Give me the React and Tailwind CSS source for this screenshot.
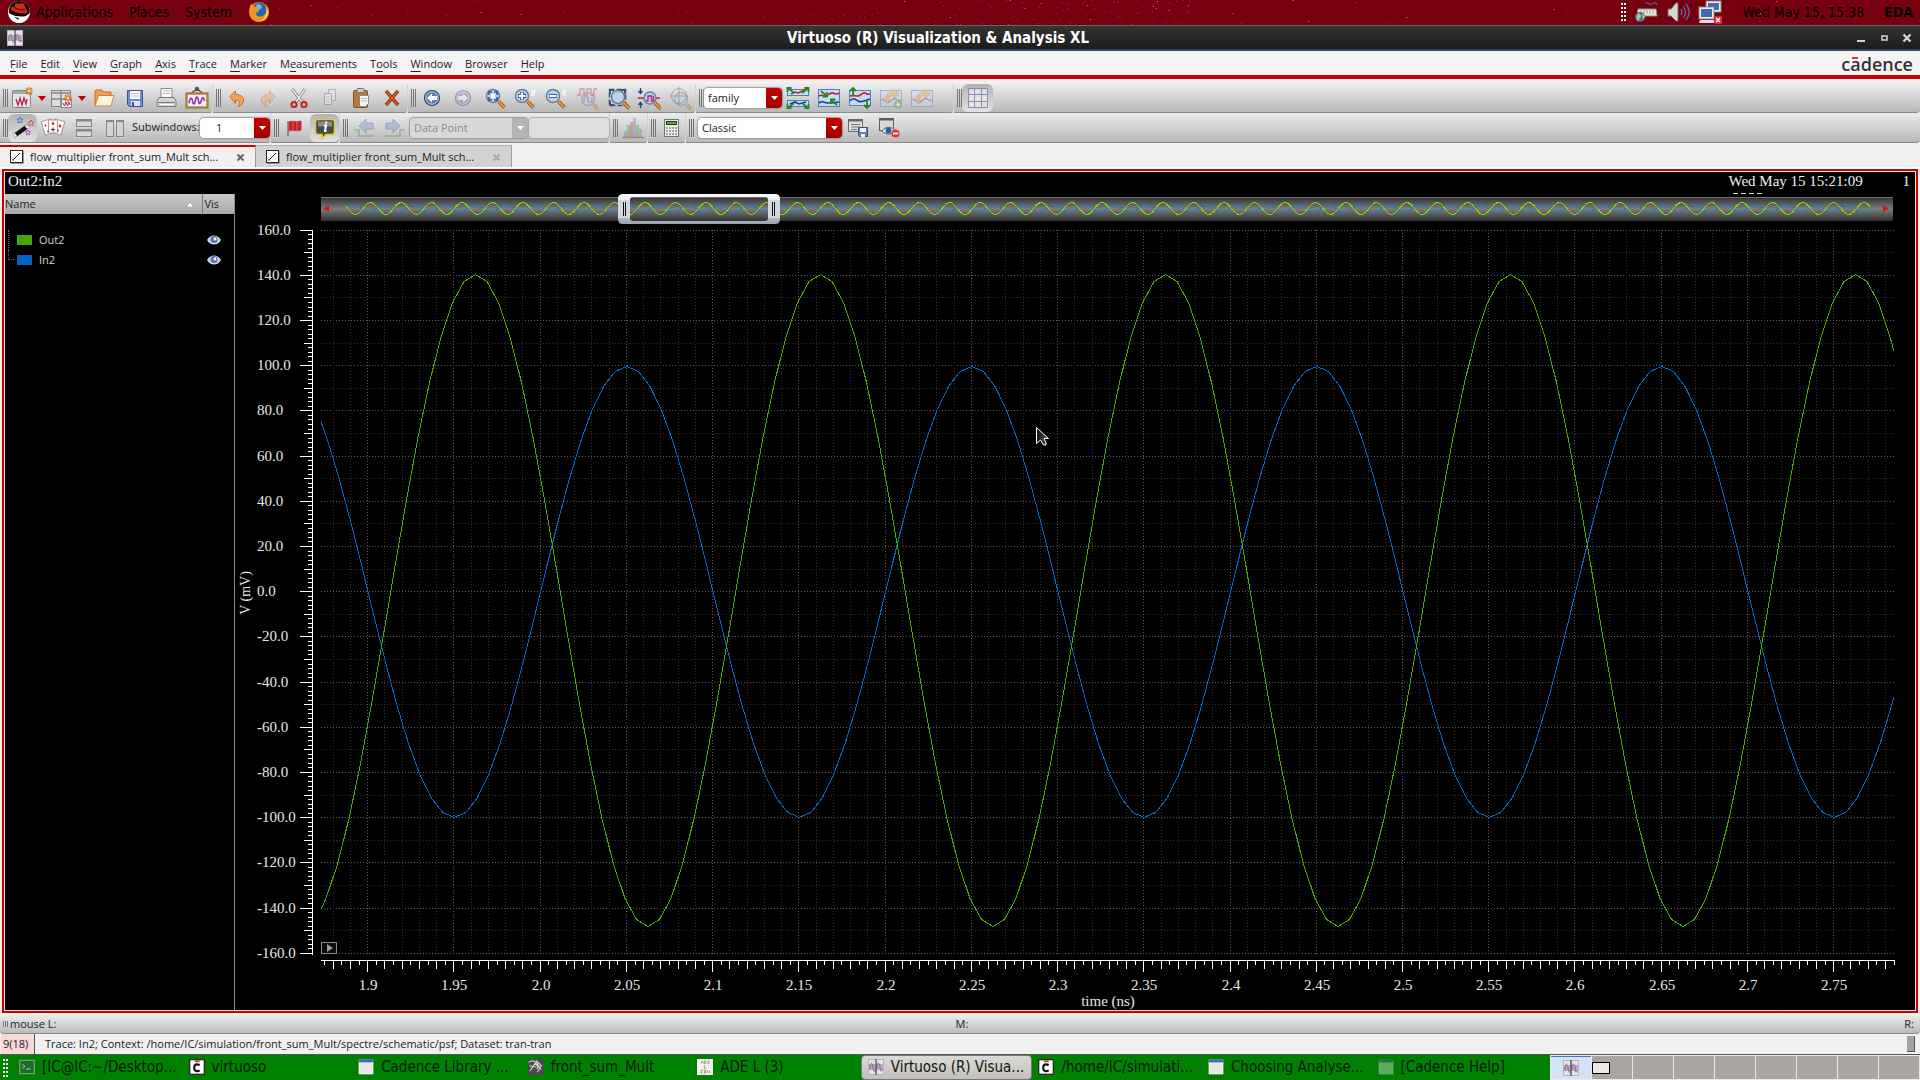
import React, { useState } from "react";
import clsx from "clsx";

const menus = [
  ["", "F", "ile"],
  ["", "E", "dit"],
  ["", "V", "iew"],
  ["", "G", "raph"],
  ["", "A", "xis"],
  ["", "T", "race"],
  ["", "M", "arker"],
  ["M", "e", "asurements"],
  ["T", "o", "ols"],
  ["", "W", "indow"],
  ["", "B", "rowser"],
  ["", "H", "elp"],
];

const traces = [
  { name: "Out2", swatch: "bg-[#43a803]" },
  { name: "In2", swatch: "bg-[#0262c0]" },
];

/* ---------- icons ---------- */

const Icon = ({ children, faded, size = 24 }) => (
  <svg
    width={size}
    height={size}
    viewBox="0 0 24 24"
    fill="none"
    className={clsx("shrink-0", faded && "opacity-40")}
    aria-hidden="true"
  >
    {children}
  </svg>
);

const Spark = ({ x, y }) => (
  <g stroke="#d9731a" strokeWidth="1.2">
    <path d={`M${x - 4} ${y}h8M${x} ${y - 4}v8M${x - 3} ${y - 3}l6 6M${x + 3} ${y - 3}l-6 6`} />
    <circle cx={x} cy={y} r="1.4" fill="#ffe7a0" stroke="none" />
  </g>
);

const NewGraphIcon = () => (
  <Icon>
    <rect x="2.5" y="4.5" width="18" height="17" rx="1" fill="#e6e6e6" stroke="#84878a" />
    <rect x="3" y="5" width="17" height="3" fill="#a5a9ad" />
    <path d="M6 13l2 6 2-7 2 7 2-7 2 6 1-5" stroke="#b0294f" strokeWidth="1.3" />
    <Spark x={19} y={5} />
  </Icon>
);

const NewSubwindowIcon = () => (
  <Icon>
    <rect x="1.5" y="4.5" width="19" height="16" fill="#dcdddd" stroke="#84878a" />
    <path d="M2 7h18M11 5v16M2 13h18" stroke="#84878a" strokeWidth="1.5" />
    <rect x="11.5" y="13.5" width="10" height="8" fill="#eee" stroke="#84878a" />
    <path d="M13 17l1.5 3 1.5-4 1.5 4 1.5-4 1 3" stroke="#b0294f" />
    <Spark x={18} y={12} />
  </Icon>
);

const OpenIcon = () => (
  <Icon>
    <path d="M3 19V5l1-1h6l2 2h7v4" fill="#e8a15a" stroke="#cc6d1e" />
    <path d="M3 20L6.5 9.5h15.500L19 20z" fill="#fdf1e0" stroke="#dd8232" />
  </Icon>
);

const SaveIcon = () => (
  <Icon>
    <path d="M4.5 4.5h15v16h-13l-2-2z" fill="#6b8fd0" stroke="#36518e" />
    <rect x="7" y="5" width="10" height="8" fill="#f7f9fc" />
    <path d="M8 7.5h8M8 10h8" stroke="#b9c4d6" />
    <rect x="8" y="15" width="9" height="5" fill="#dfe3ea" />
    <rect x="9" y="16" width="2" height="4" fill="#36518e" />
  </Icon>
);

const PrintIcon = () => (
  <Icon>
    <path d="M7 12V2.5h11V12" fill="#fafafa" stroke="#86888a" />
    <path d="M9 5h7M9 7.5h7" stroke="#b9b9b9" />
    <path d="M5 11.5h15l2 4v5H3v-5z" fill="#d4d5d5" stroke="#77797b" />
    <path d="M4 16.5h17" stroke="#77797b" />
    <path d="M6 18.5h13" stroke="#fff" />
  </Icon>
);

const ScrapbookIcon = () => (
  <Icon>
    <path d="M5 8l7-5 7 5" stroke="#444" strokeWidth="1.3" />
    <circle cx="12" cy="3" r="2.2" fill="#555" />
    <rect x="1.5" y="7.5" width="21" height="14" fill="#f4f0fa" stroke="#a9803a" strokeWidth="2.4" />
    <path d="M4 17c1-6 3-6 3.5-2s2 4 3-1 2.5-3 3 1 2 3 3-1 2-3 3 1" stroke="#9a2fa8" strokeWidth="1.6" />
  </Icon>
);

const TurnIcon = ({ flip, faded }) => (
  <Icon faded={faded}>
    <g transform={flip ? "translate(24 0) scale(-1 1)" : undefined}>
      <path
        d="M5 10.5L10.500 5v3.5c6 0 8.500 3 8 6.500-.5 3-2.500 5-5.500 5.500 2.500-2.500 2-6.500-2.500-6.500v3.500z"
        fill="#f0a35c"
        stroke="#d2691e"
      />
    </g>
  </Icon>
);

const CutIcon = () => (
  <Icon>
    <path d="M5 3l10 13M18 3L9 16" stroke="#7f8386" strokeWidth="3" />
    <path d="M5 3l10 13M18 3L9 16" stroke="#e9eaea" strokeWidth="1.4" />
    <circle cx="7" cy="18.5" r="2.6" stroke="#c5221c" strokeWidth="2" />
    <circle cx="17" cy="18.5" r="2.6" stroke="#c5221c" strokeWidth="2" />
  </Icon>
);

const CopyIcon = () => (
  <Icon faded>
    <path d="M10.5 3.5h7v11h-7z" fill="#eee" stroke="#666" />
    <path d="M6.500 7.5h7v11h-7z" fill="#f4f4f4" stroke="#666" />
    <path d="M8 10.500h4M8 13h4M8 15.500h4" stroke="#aaa" />
  </Icon>
);

const PasteIcon = () => (
  <Icon>
    <rect x="4.5" y="4.5" width="14" height="17" rx="1" fill="#b9783a" stroke="#85501b" />
    <rect x="8" y="2.5" width="7" height="4" rx="1" fill="#ccc" stroke="#777" />
    <path d="M10.5 9.5h9v8l-3 3h-6z" fill="#f3f3f3" stroke="#888" />
    <path d="M12 12.5h6M12 15h6" stroke="#bbb" />
  </Icon>
);

const DeleteIcon = () => (
  <Icon>
    <path d="M6 5l12 14M18 5L6 19" stroke="#7c2503" strokeWidth="3.4" />
    <path d="M6 5l12 14M18 5L6 19" stroke="#e0601a" strokeWidth="1.5" />
  </Icon>
);

const RoundArrowIcon = ({ flip, faded }) => (
  <Icon faded={faded}>
    <circle cx="12" cy="12" r="7.5" fill="#5d7bab" stroke="#2f4877" strokeWidth="1.2" />
    <circle cx="12" cy="12" r="6.2" stroke="#c9d6ea" />
    <path
      d="M7 12l5-4.5V10h5v4h-5v2.5z"
      fill="#fff"
      transform={flip ? "translate(24 0) scale(-1 1)" : undefined}
    />
  </Icon>
);

const Lens = ({ x = 10, y = 10, r = 6.5 }) => (
  <g>
    <path d={`M${x + r - 1} ${y + r - 1}l6 6`} stroke="#8f4a0c" strokeWidth="3.6" />
    <path d={`M${x + r - 1} ${y + r - 1}l6 6`} stroke="#ee9a3a" strokeWidth="1.8" />
    <circle cx={x} cy={y} r={r} fill="#b9d3ee" stroke="#6b7f98" strokeWidth="1.5" />
  </g>
);

const ZoomFitIcon = () => (
  <Icon>
    <Lens x={11} y={10} />
    <path d="M7 9V6h3M12 6h3v3M15 11v3h-3M10 14H7v-3" stroke="#33578d" strokeWidth="1.6" />
    <rect x="9" y="8" width="4" height="4" fill="#fff" />
  </Icon>
);

const ZoomStepIcon = ({ plus }) => (
  <Icon>
    <Lens x={9} y={10} />
    <path d={plus ? "M5 10h8M9 6v8" : "M5 10h8"} stroke="#2f5486" strokeWidth="4" />
    <path d={plus ? "M5.5 10h7M9 6.5v7" : "M5.5 10h7"} stroke="#fff" strokeWidth="2.2" />
    <path d="M18.500 4.500h3v2h-2.500v2.500h3" stroke="#fff" strokeWidth="1.2" />
  </Icon>
);

const ZoomWaveIcon = () => (
  <Icon faded>
    <Lens x={13} y={13} />
    <path d="M2 9h3V3h4v6h3V3h4v6h3V3h3" stroke="#c8293f" strokeWidth="1.4" />
    <path d="M9 16v-5h4v5h4v-5" stroke="#a03070" strokeWidth="1.2" />
  </Icon>
);

const ZoomBoxIcon = () => (
  <Icon>
    <rect x="3.5" y="3.5" width="16" height="16" stroke="#3b4f68" strokeWidth="1.6" strokeDasharray="5 2" />
    <Lens x={12} y={11} r={6.5} />
    <path d="M4 8V4h4M15 4h4v4M4 15v4h4" stroke="#3b4f68" strokeWidth="1.8" />
  </Icon>
);

const ZoomYIcon = () => (
  <Icon>
    <path
      d="M3.5 2v5M1.5 5l2 2.5 2-2.5M3.5 22v-5M1.5 19l2-2.5 2 2.5"
      stroke="#1d3f80"
      strokeWidth="1.3"
    />
    <path d="M1 12h6M18 12h5" stroke="#b82626" strokeWidth="1.5" />
    <Lens x={13} y={12} r={6} />
    <path d="M9 15h2v-5h3.500v5h2v-5" stroke="#b3266c" strokeWidth="1.4" />
  </Icon>
);

const TargetIcon = () => (
  <Icon faded>
    <Lens x={13} y={13} />
    <circle cx="11" cy="10" r="7.5" stroke="#555" />
    <path d="M11 1v18M2 10h18" stroke="#555" />
  </Icon>
);

const Strip = ({ y, h, d, stroke }) => (
  <g>
    <rect x="1.5" y={y} width="21" height={h} fill="#c6dcf6" stroke="#4a7fc6" />
    <path d={d} stroke={stroke} strokeWidth="1.6" />
  </g>
);

const greenArrow = { stroke: "#1e8a1e", strokeWidth: 1.8 };

const SplitIcon = () => (
  <Icon>
    <Strip y={3.5} h={6} d="M5 8l4-2 3 1 7-3" stroke="#d11a1a" />
    <Strip y={14.5} h={6} d="M4 18l5-2 4 2 7-2" stroke="#173f86" />
    <path
      d="M1.5 6V2h4M2 2l6 5M22.5 6V2h-4M22 2l-6 5M1.5 18v4h4M2 22l6-5M22.5 18v4h-4M22 22l-6-5"
      {...greenArrow}
    />
  </Icon>
);

const CombineIcon = () => (
  <Icon>
    <Strip y={3.5} h={17} d="M2 10c3-2 4 0 6 0s6-4 8-3 4 2 6 0" stroke="#d11a1a" />
    <path d="M2 17c4-3 5 0 8 0s6 0 12-1" stroke="#173f86" strokeWidth="1.6" />
    <path d="M4 5l6 5M10 6v4.5H5.5M20 19l-6-5M14 18v-4.5h4.5" {...greenArrow} />
  </Icon>
);

const SpreadIcon = () => (
  <Icon>
    <Strip y={4.5} h={15} d="M2 10c4-1 5 0 8 0s4-4 7-3 3 2 5 1" stroke="#d11a1a" />
    <path d="M2 15c3-4 5-2 8 0s6 0 12-2" stroke="#173f86" strokeWidth="1.6" />
    <path d="M5 10V2M2 5l3-3 3 3M19 14v8M16 19l3 3 3-3" {...greenArrow} />
  </Icon>
);

const ReloadIcon = ({ plus }) => (
  <Icon faded>
    <Strip y={4.5} h={16} d="M2 14c3-3 5 4 8 2s5-5 7-3 3 2 5 1" stroke="#c43a3a" />
    <path d="M7 17c-2-7 2-11 8-11V3l5 5-5 4V9c-4 0-6 3-5 8z" fill="#f2a44c" stroke="#d07a1e" />
    {plus && (
      <g>
        <circle cx="19" cy="18.5" r="4" fill="#2f9a2f" />
        <path d="M16.5 18.5h5M19 16v5" stroke="#fff" strokeWidth="1.5" />
      </g>
    )}
  </Icon>
);

const GridIcon = () => (
  <Icon>
    <path d="M3.5 3.5h18v18h-18z" fill="#e4e4e4" />
    <path d="M2.5 2.5h19v19h-19zM8.500 2v20M15.500 2v20M2 8.500h20M2 15.500h20" stroke="#8e8eb4" />
  </Icon>
);

const WandIcon = () => (
  <Icon>
    <path d="M3 20L17 10" stroke="#111" strokeWidth="4" />
    <path d="M3 20l2-1.5M15 11.500L17 10" stroke="#eee" strokeWidth="4" />
    <path d="M9 1l1 2 2 .3-1.500 1.500.4 2L9 6l-2 .8.4-2L6 3.300 8 3z" stroke="#4f76d8" />
    <path d="M20 4l1 2 2 .3-1.500 1.500.4 2-1.900-1-2 1 .4-2L17 6.300l2-.3z" stroke="#dd4a5c" />
    <path d="M17 14l.8 1.500 1.700.3-1.200 1.200.3 1.700-1.600-.8-1.500.8.3-1.700-1.300-1.200 1.700-.3z" stroke="#b148c4" />
  </Icon>
);

const CardsIcon = () => (
  <Icon>
    <rect x="2" y="4" width="10" height="14" rx="1" fill="#fff" stroke="#999" transform="rotate(-18 7 11)" />
    <rect x="12" y="4" width="10" height="14" rx="1" fill="#fff" stroke="#999" transform="rotate(18 17 11)" />
    <rect x="7.5" y="4" width="9" height="13" rx="1" fill="#fff" stroke="#999" />
    <path
      d="M12 5.500l1.500 2-1.500 2-1.500-2zM4.500 8l1 1.500-1 1.500-1-1.500zM19 8l1.500 2-1.500 2-1.500-2zM17 13l1 1.500-1 1.500-1-1.500zM7 14l1 1.500-1 1.500-1-1.500z"
      fill="#dc2020"
    />
    <path d="M12 11.500v4M10 13.500h4" stroke="#333" />
  </Icon>
);

const RowsIcon = () => (
  <Icon>
    <rect x="4.5" y="3.5" width="15" height="7" fill="#d9d9d9" stroke="#85888b" />
    <rect x="4.5" y="13.5" width="15" height="7" fill="#d9d9d9" stroke="#85888b" />
    <path d="M4 4.5h16M4 14.5h16" stroke="#85888b" strokeWidth="2" />
  </Icon>
);

const ColumnsIcon = () => (
  <Icon>
    <rect x="3.5" y="4.5" width="7" height="16" fill="#d3d3d3" stroke="#85888b" />
    <rect x="13.5" y="4.5" width="7" height="16" fill="#d3d3d3" stroke="#85888b" />
    <path d="M3 5h8M13 5h8" stroke="#85888b" strokeWidth="2" />
  </Icon>
);

const FlagIcon = () => (
  <Icon>
    <path d="M5 5v15" stroke="#777" strokeWidth="1.5" />
    <path d="M6 6c4-2 5 1 12-1v9c-6 2-8-1-12 1z" fill="#cf1b28" stroke="#a8434a" />
    <path d="M10 6v9M14 6v9" stroke="#ea5b62" />
  </Icon>
);

const InfoIcon = () => (
  <Icon>
    <path
      d="M5 3.500h14c2 0 2.500 1 2.500 2.500v10c0 2-1 2.500-2.500 2.500h-6l-4 4v-4H5c-2 0-2.500-1-2.500-2.500V6c0-1.500.5-2.500 2.500-2.500z"
      fill="#4a4a4a"
      stroke="#e2ca2e"
      strokeWidth="1.5"
    />
    <path d="M5 5.500h14v5H5z" fill="#8c8c8c" />
    <path d="M13.500 5.500l-.4 2M11 9.500h2l-1 5.500h1.500" stroke="#fff" strokeWidth="2" />
  </Icon>
);

const StepArrowIcon = ({ flip }) => (
  <Icon faded>
    <g transform={flip ? "translate(24 0) scale(-1 1)" : undefined}>
      <path d="M7 10l7-7v4h7v6h-7v4z" fill="#7d95cc" stroke="#4660a0" />
      <path d="M2 14h5v6h15" stroke="#3aa04a" strokeWidth="1.6" />
    </g>
  </Icon>
);

const HistogramIcon = () => (
  <Icon faded>
    <rect x="3" y="15" width="3" height="6" fill="#7a86a0" />
    <rect x="6" y="9" width="3" height="12" fill="#3cae3c" />
    <rect x="9" y="6" width="3" height="15" fill="#d04848" />
    <rect x="12" y="2" width="3" height="19" fill="#6d86c8" />
    <rect x="15" y="9" width="3" height="12" fill="#3cae3c" />
    <rect x="18" y="13" width="3" height="8" fill="#7a86a0" />
    <path d="M1 21.5h22" stroke="#c02020" strokeWidth="1.5" />
  </Icon>
);

const CalculatorIcon = () => (
  <Icon>
    <rect x="5.5" y="3.5" width="14" height="17" fill="#ececec" stroke="#707274" />
    <rect x="7" y="5" width="11" height="4" fill="#1f3a12" />
    <path d="M8 7h9" stroke="#6fd52c" strokeWidth="1.5" />
    <path d="M7 12h11M7 15h11M7 18h11" stroke="#8c8f92" strokeWidth="1.6" strokeDasharray="2 1" />
  </Icon>
);

const ViewSaveIcon = () => (
  <Icon>
    <rect x="2.5" y="3.5" width="14" height="12" fill="#dedede" stroke="#666a6e" />
    <path d="M3 4.5h13" stroke="#666a6e" strokeWidth="2" />
    <path d="M5 8.500h9M5 11h9M5 13.500h6" stroke="#777" />
    <path d="M12.500 11.500h9v9h-8l-1-1z" fill="#5f80c0" stroke="#3a5083" />
    <path d="M14 12h6v4h-6zM15 18h4v3h-4z" fill="#f4f4f4" />
  </Icon>
);

const ViewHideIcon = () => (
  <Icon>
    <rect x="2.5" y="2.5" width="14" height="12" fill="#d8d8d8" stroke="#5b5f63" />
    <path d="M3 3.5h13" stroke="#5b5f63" strokeWidth="2" />
    <path d="M5 15c4-5 10-5 13 0-3 4-9 4-13 0z" fill="#eef3fa" stroke="#3c5a90" />
    <circle cx="11.5" cy="14.5" r="3" fill="#3c5a90" />
    <circle cx="18.500" cy="17.500" r="4" fill="#de3b36" />
    <path d="M16 17.500h5" stroke="#fff" strokeWidth="1.6" />
  </Icon>
);

const WaveAppIcon = () => (
  <svg width="16" height="16" viewBox="0 0 16 16" fill="none" className="shrink-0" aria-hidden="true">
    <rect x="0.5" y="0.5" width="15" height="15" fill="#e3e4e8" stroke="#b4b5b8" />
    <rect x="1" y="5" width="14" height="6" fill="#a3b1d3" />
    <path d="M2 11V8C2.500 3 4.500 3 5 8s2 6 2.500 2M9 10V7c.5-4 2.500-4 3 1s1.500 5 2.500 2" stroke="#c0526a" />
    <path d="M8 0v16" stroke="#55585f" strokeWidth="1.4" />
  </svg>
);

const RedHatIcon = () => (
  <Icon size={22}>
    <circle cx="12" cy="12" r="12" fill="#fff" />
    <path d="M1 13C0 6 5 0 12 0s13 6 11.500 13c-3 4-7 4-11 4-5 0-9-1-11.500-4z" fill="#140505" />
    <path d="M8 3c2-1 3 0 4 0 2-1 5-1 6 1l1.500 5c2 1 3 4-1 4.500C12 14 4 12 3 8c0-1.500 2-2 4-1.500z" fill="#d3271d" />
    <path d="M7 7c3 2 7 3 11.500 2.500" stroke="#140505" />
    <path d="M1 13c3 2 7 4 12 4l4 2c1 2-1 4-4 5C6 24 1 19 1 13z" fill="#fff" />
    <path d="M6 17c2 1 4 1.500 6 1.500l-1 2z" fill="#140505" />
  </Icon>
);

const FirefoxIcon = () => (
  <Icon size={22}>
    <circle cx="12" cy="12" r="11" fill="#e8731a" />
    <circle cx="12.500" cy="10" r="8" fill="#2b62ac" />
    <path d="M10 3c4 0 6 3 5 5l-3 2-2 3-4-2z" fill="#6db3e6" />
    <path
      d="M2 7c0-2 1-3 2-4 1 2 2 3 4 3 2 2 5 3 3 5-3 1-3 3-1 5 3 2 8 1 10-4 1-4 0-6-1-8 4 3 5 9 2 14-4 6-13 6-17 1C1 15 1 11 2 7z"
      fill="#f0941f"
    />
    <path d="M20 6c3 5 2 10-1 13-2 2-5 3-7 3 6-2 9-8 8-16z" fill="#f9d84a" />
  </Icon>
);

const KeyboardIcon = () => (
  <Icon>
    <path d="M11 3c4-2 3 3 7 1s4-2 5 1" stroke="#4a5d96" strokeWidth="1.3" />
    <path d="M4 9h18l1 7H3z" fill="#e6e6e2" stroke="#8f8f8a" />
    <path d="M6 11h15M6 13h15" stroke="#a5a5a0" strokeDasharray="2 1" />
    <circle cx="6" cy="17" r="5" fill="#3f6fc0" />
    <path d="M3 15c2-3 4-1 4 1s-3 3-2 5c-2 0-3-3-2-6zM8 14l3 2-2 4z" fill="#b9c94a" />
  </Icon>
);

const SpeakerIcon = () => (
  <Icon>
    <path d="M2 9h3l5-6h2v18h-2l-5-5H2z" fill="#d6d8d2" stroke="#6a6c66" />
    <path d="M15 9c1 2 1 4 0 6M17.500 6.500c2.500 4 2.500 8 0 11M20 4c4 5 4 11 0 16" stroke="#5b6fae" strokeWidth="1.3" />
  </Icon>
);

const NetworkIcon = () => (
  <Icon>
    <rect x="8" y="1" width="15" height="11" fill="#eee" stroke="#888" />
    <rect x="10" y="3" width="11" height="7" fill="#3f6cb0" />
    <path d="M2 20h14l1 3H1z" fill="#ddd" />
    <rect x="1" y="7" width="15" height="12" fill="#eee" stroke="#888" />
    <rect x="3" y="9" width="11" height="8" fill="#3f6cb0" />
    <rect x="16" y="16" width="8" height="8" rx="1" fill="#e0252b" />
    <path d="M18 18l4 4M22 18l-4 4" stroke="#fff" strokeWidth="1.5" />
  </Icon>
);

const TerminalIcon = () => (
  <Icon size={16}>
    <rect x="1" y="2" width="22" height="20" rx="1" fill="#1f6a2c" stroke="#6b9f73" strokeWidth="2" />
    <path d="M5 8l4 3-4 3M11 15h6" stroke="#b7dcb9" strokeWidth="1.5" />
  </Icon>
);

const CadenceIcon = () => (
  <Icon size={16}>
    <rect x="1" y="1" width="22" height="22" fill="#fff" stroke="#2b2b2b" strokeWidth="2" />
    <path d="M16 9c-7-3-9 1-8 6 1 4 5 4 8 2" stroke="#111" strokeWidth="3.4" />
    <path d="M9 3.500h7" stroke="#e02020" strokeWidth="2.4" />
  </Icon>
);

const WindowIcon = ({ faded }) => (
  <Icon size={16} faded={faded}>
    <rect x="2" y="2" width="20" height="20" fill="#e6e6e2" stroke="#f8f8f6" strokeWidth="2" />
    <rect x="1" y="1" width="22" height="4" fill="#3f67b4" />
  </Icon>
);

const SchematicIcon = () => (
  <Icon size={16}>
    <rect width="24" height="24" fill="#4a4a4a" />
    <path
      d="M1 5c8-5 18 2 12 10M3 18l8-12 5 8M10 8c4 0 8 3 9 8M2 10l10 2M12 2l8 8-6 10"
      stroke="#d9d9d9"
      strokeWidth="1.6"
    />
  </Icon>
);

const AdeIcon = () => (
  <Icon size={16}>
    <rect width="24" height="24" fill="#f2f2f2" />
    <path
      d="M6 7l2-4 2 4M11 3v4h2l1-2-1-2zM16 3h3M16 5h3M16 7h3M11 9v5h3M9 17h-3v4h3M11 17h2v4h-2zM16 17v4M19 17v4"
      stroke="#777"
    />
  </Icon>
);

const GraphTabIcon = () => (
  <svg width="14" height="14" viewBox="0 0 14 14" fill="none" className="shrink-0" aria-hidden="true">
    <rect x="0.5" y="0.5" width="12" height="12" fill="#fff" stroke="#222" />
    <path d="M3 10L10 3" stroke="#222" />
    <path d="M2.500 9v1.500H4M13.500 1v12.500H1" stroke="#999" />
  </svg>
);

const EyeIcon = () => (
  <svg width="14" height="10" viewBox="0 0 14 10" aria-hidden="true">
    <path d="M0 5c3-6 11-6 14 0-3 6-11 6-14 0z" fill="#c9d3e8" />
    <circle cx="7" cy="4.5" r="3.5" fill="#5b74a8" />
    <circle cx="8" cy="4" r="1.4" fill="#fff" />
  </svg>
);

/* ---------- toolbar parts ---------- */

const Handle = ({ dotted }) => (
  <span className="flex h-[18px] w-2 shrink-0 justify-end gap-px" aria-hidden="true">
    {dotted ? (
      <span className="w-[5px] border-x-2 border-dotted border-white" />
    ) : (
      <>
        <span className="w-px bg-neutral-500" />
        <span className="w-px bg-neutral-500" />
        <span className="w-px bg-neutral-500" />
      </>
    )}
  </span>
);

const ToolGroup = ({ children, grow }) => (
  <div
    className={clsx(
      "flex items-center rounded-br border-b border-[#8b8b8b] bg-linear-to-b from-[#ececec] to-[#b9b9b9]",
      grow ? "flex-1" : "border-r border-r-[#d0d0d0]"
    )}
  >
    {children}
  </div>
);

const ToolButton = ({ label, width = "w-[31px]", active, disabled, children }) => (
  <button
    type="button"
    aria-label={label}
    aria-pressed={active}
    disabled={disabled}
    className={clsx(
      "flex h-7 shrink-0 items-center justify-center",
      width,
      active && "rounded-md bg-linear-to-b from-[#b4b4b4] to-[#e2e2e2]"
    )}
  >
    {children}
  </button>
);

const MenuArrow = ({ label }) => (
  <button type="button" aria-label={label} className="flex h-7 w-[13px] items-center justify-center">
    <svg width="8" height="5" viewBox="0 0 8 5" aria-hidden="true">
      <path d="M0 0h8L4 5z" fill="#c00000" />
    </svg>
  </button>
);

const Combo = ({ label, options, width, disabled, indent = "pl-1" }) => {
  const [value, setValue] = useState(options[0]);
  return (
    <div
      className={clsx(
        "flex h-5 shrink-0 overflow-hidden rounded shadow-[0_0_1px_1px_#9b9b9b]",
        disabled ? "bg-[#d8d8d8]" : "bg-white",
        width
      )}
    >
      <select
        aria-label={label}
        value={value}
        disabled={disabled}
        onChange={(e) => setValue(e.target.value)}
        className={clsx(
          "min-w-0 flex-1 appearance-none bg-transparent leading-5 outline-none",
          indent,
          disabled ? "text-[#8a8a8a]" : "text-[#222]"
        )}
      >
        {options.map((option) => (
          <option key={option}>{option}</option>
        ))}
      </select>
      <span
        className={clsx(
          "flex w-4 items-center justify-center",
          disabled ? "bg-[#b3b3b3]" : "bg-linear-to-b from-[#c80000] to-[#a00000]"
        )}
      >
        <svg width="7" height="4" viewBox="0 0 7 4" aria-hidden="true">
          <path d="M0 0h7L3.5 4z" fill="#fff" />
        </svg>
      </span>
    </div>
  );
};

/* ---------- chart ---------- */

const PERIOD = 345;
const LEFT = 321;
const RIGHT = 1894;
const xOf = (t) => Math.round(367.2 + (t - 1.9) * 1724.7);
const yOf = (v) => Math.round(591.2 - v * 2.2594);

const wave = (peakX, mean, amp) => {
  const value = (x) => mean + amp * Math.cos(((x - peakX) / PERIOD) * 2 * Math.PI);
  const step = PERIOD / 30;
  const xs = [LEFT];
  for (let x = peakX - Math.floor((peakX - LEFT - 1) / step) * step; x < RIGHT; x += step) xs.push(x);
  xs.push(RIGHT);
  return xs.map((x) => `${x.toFixed(1)},${(591.5 - value(x) * 2.2594).toFixed(1)}`).join(" ");
};

const miniWave = (peakX, amp) => {
  const pts = [];
  for (let x = 346; x <= 1870; x += 2) {
    const y = 208.5 - amp * Math.cos(((x - peakX) / 30.476) * 2 * Math.PI);
    pts.push(`${x},${y.toFixed(1)}`);
  }
  return pts.join(" ");
};

const yTicks = Array.from({ length: 161 }, (_, i) => 160 - i * 2);
const xTicks = Array.from({ length: 183 }, (_, i) => 1875 + i * 5).filter((t) => xOf(t / 1000) <= RIGHT);

const Chart = () => (
  <svg
    viewBox="235 194 1680 816"
    className="h-full w-full font-['Liberation_Serif',serif]"
    role="img"
    aria-label="V (mV) versus time (ns)"
  >
    <defs>
      <linearGradient id="track" x1="0" y1="0" x2="0" y2="1">
        <stop offset="0" stopColor="#303030" />
        <stop offset="0.5" stopColor="#7c7c7c" />
        <stop offset="1" stopColor="#303030" />
      </linearGradient>
      <linearGradient id="thumb" x1="0" y1="0" x2="0" y2="1">
        <stop offset="0" stopColor="#fbfbfd" />
        <stop offset="0.5" stopColor="#d2d6de" />
        <stop offset="1" stopColor="#9ba2ae" />
      </linearGradient>
      <linearGradient id="pointer" x1="0" y1="0" x2="1" y2="0">
        <stop offset="0" stopColor="#111" />
        <stop offset="1" stopColor="#555" />
      </linearGradient>
    </defs>

    {/* range slider */}
    <rect x="321" y="197" width="1572" height="24" fill="url(#track)" />
    <path d="M321 197.5h1572" stroke="#6d6d6d" />
    <path
      d="M618 199q0-5 5-5h152q5 0 5 5v20q0 5-5 5h-152q-5 0-5-5zM630 200v18q0 3 3 3h132q3 0 3-3v-18q0-3-3-3h-132q-3 0-3 3z"
      fill="url(#thumb)"
      fillRule="evenodd"
    />
    <g fill="none" shapeRendering="crispEdges">
      <polyline points={miniWave(383.9, 4)} stroke="#0a80e4" />
      <polyline points={miniWave(370.7, 6)} stroke="#80dc00" />
    </g>
    <path d="M618 200h12v18h-12zM768 200h12v18h-12z" fill="#d2d6de" />
    <path d="M623.5 202v14M625.5 202v14M772.5 202v14M774.5 202v14" stroke="#111" />
    <path d="M323 208.5l6-3v6zM1889 208.5l-6-3v6z" fill="#e01010" />

    {/* grid */}
    <g strokeDasharray="1 2" shapeRendering="crispEdges">
      {yTicks
        .filter((v) => v % 10 === 0)
        .map((v) => (
          <path key={v} d={`M${LEFT} ${yOf(v) + 0.5}H${RIGHT}`} stroke={v % 20 === 0 ? "#5a5a5a" : "#2e2e2e"} />
        ))}
      {xTicks
        .filter((t) => t % 10 === 0)
        .map((t) => (
          <path key={t} d={`M${xOf(t / 1000) + 0.5} 230V954`} stroke={t % 50 === 0 ? "#5a5a5a" : "#2e2e2e"} />
        ))}
    </g>

    {/* y axis */}
    <g stroke="#fff" shapeRendering="crispEdges">
      <path d="M312.5 230V955" />
      {yTicks.map((v) => {
        const start = v % 20 === 0 ? 300 : v % 10 === 0 ? 304 : 308;
        return <path key={v} d={`M${start} ${yOf(v) + 0.5}H313`} />;
      })}
    </g>
    <g fill="#e8e8e8" fontSize="15">
      {yTicks
        .filter((v) => v % 20 === 0)
        .map((v) => (
          <text key={v} x="257" y={yOf(v) + 5}>
            {v.toFixed(1)}
          </text>
        ))}
      <text transform="translate(250 593) rotate(-90)" textAnchor="middle" fontSize="14">
        V (mV)
      </text>
    </g>

    {/* x axis */}
    <g stroke="#fff" shapeRendering="crispEdges">
      <path d={`M${LEFT} 960.5H1895`} />
      {xTicks.map((t) => {
        const end = t % 50 === 0 ? 972 : t % 10 === 0 ? 969 : 965;
        return <path key={t} d={`M${xOf(t / 1000) + 0.5} 960V${end}`} />;
      })}
    </g>
    <g fill="#e8e8e8" fontSize="15" textAnchor="middle">
      {xTicks
        .filter((t) => t % 50 === 0)
        .map((t) => (
          <text key={t} x={xOf(t / 1000) + 1} y="990">
            {t % 100 === 0 ? (t / 1000).toFixed(1) : (t / 1000).toFixed(2)}
          </text>
        ))}
      <text x="1108" y="1006">
        time (ns)
      </text>
    </g>

    {/* traces */}
    <g fill="none" shapeRendering="crispEdges">
      <polyline points={wave(626.8, -0.2, 99.8)} stroke="#0468c8" />
      <polyline points={wave(475.5, -4, 144.3)} stroke="#48ac04" />
    </g>

    <rect x="321.5" y="942.5" width="15" height="11" fill="#0c0c0c" stroke="#8c8c8c" />
    <path d="M327 944v8l6-4z" fill="#9a9a9a" />

    {/* pointer */}
    <path
      d="M1036.5 427.5v16l4-3.5 3 5h2.5v-2l-2-4.500h4.500z"
      fill="url(#pointer)"
      stroke="#fff"
    />
  </svg>
);

/* ---------- bars ---------- */

const specks = Array.from({ length: 260 }, (_, i) => {
  const r = (n) => Math.abs(Math.sin(i * n + n) * 43758.5) % 1;
  return {
    x: i % 2 ? 62 - 22 * r(12.9) * r(3.1) : 100 * r(7.7),
    y: Math.floor(25 * r(4.3)),
    fill: r(9.1) > 0.9 ? "#ee7c8a" : r(9.1) > 0.5 ? "#a82a52" : "#8e1238",
  };
});

const DesktopPanel = () => (
  <header className="relative flex h-[25px] items-center bg-[#76000f] pr-[7px] pb-0.5 pl-2 font-['DejaVu_Sans_Condensed','DejaVu_Sans',sans-serif] text-sm text-black">
    <svg className="absolute inset-0 h-full w-full" aria-hidden="true">
      {specks.map((s, i) => (
        <rect key={i} x={`${s.x}%`} y={s.y} width="1" height="1" fill={s.fill} />
      ))}
    </svg>
    <nav className="relative flex flex-1 items-center gap-4">
      <span className="flex items-center gap-1.5">
        <RedHatIcon />
        <button type="button">Applications</button>
      </span>
      <button type="button">Places</button>
      <button type="button">System</button>
      <button type="button" aria-label="Firefox">
        <FirefoxIcon />
      </button>
    </nav>
    <div className="relative flex items-center gap-5">
      <div className="flex items-center gap-2">
        <Handle dotted />
        <KeyboardIcon />
        <SpeakerIcon />
        <NetworkIcon />
      </div>
      <span>Wed May 15, 15:38</span>
      <span className="font-bold">EDA</span>
    </div>
  </header>
);

const TitleBar = () => (
  <div className="flex h-[26px] items-center border-t border-b-2 border-t-[#666] border-b-[#33445e] bg-linear-to-b from-[#343434] to-[#1c1c1c] px-[7px]">
    <WaveAppIcon />
    <h1 className="flex-1 text-center font-['DejaVu_Sans_Condensed','DejaVu_Sans',sans-serif] text-[15px] leading-5 font-bold text-white">
      Virtuoso (R) Visualization &amp; Analysis XL
    </h1>
    <div className="flex items-center gap-2">
      <button type="button" aria-label="Minimize">
        <svg width="16" height="12" viewBox="0 0 16 12" aria-hidden="true">
          <path d="M4 9h8" stroke="#d4d4cf" strokeWidth="2" />
        </svg>
      </button>
      <button type="button" aria-label="Maximize">
        <svg width="16" height="12" viewBox="0 0 16 12" fill="none" aria-hidden="true">
          <path d="M5 4h5v4H5z" stroke="#d4d4cf" strokeWidth="1.5" />
        </svg>
      </button>
      <button type="button" aria-label="Close">
        <svg width="12" height="12" viewBox="0 0 12 12" aria-hidden="true">
          <path d="M2.5 2.5l7 7M9.5 2.5l-7 7" stroke="#d4d4cf" strokeWidth="2.4" />
        </svg>
      </button>
    </div>
  </div>
);

const MenuBar = () => (
  <nav className="flex h-7 items-center border-b-4 border-[#cc0000] bg-[#f3f3f3] pt-0.5 pr-[7px] pl-2.5">
    <div className="flex flex-1 gap-[13px]">
      {menus.map(([before, key, after]) => (
        <button type="button" key={before + key + after}>
          {before}
          <span className="underline underline-offset-3">{key}</span>
          {after}
        </button>
      ))}
    </div>
    <span className="text-lg leading-5 font-semibold text-[#333]">
      c
      <span className="relative">
        a
        <span className="absolute top-[5px] left-0.5 h-0.5 w-1.5 bg-[#e0343a]" />
      </span>
      dence
    </span>
  </nav>
);

const MainToolbar = () => (
  <div className="mt-[5px] flex h-[29px]">
    <ToolGroup>
      <Handle />
      <ToolButton label="New window" width="w-[27px]"><NewGraphIcon /></ToolButton>
      <MenuArrow label="New window options" />
      <ToolButton label="New subwindow" width="w-[27px]"><NewSubwindowIcon /></ToolButton>
      <MenuArrow label="New subwindow options" />
      <ToolButton label="Open"><OpenIcon /></ToolButton>
      <ToolButton label="Save"><SaveIcon /></ToolButton>
      <ToolButton label="Print"><PrintIcon /></ToolButton>
      <ToolButton label="Save image"><ScrapbookIcon /></ToolButton>
    </ToolGroup>
    <ToolGroup>
      <Handle />
      <ToolButton label="Undo"><TurnIcon /></ToolButton>
      <ToolButton label="Redo" disabled><TurnIcon flip faded /></ToolButton>
      <ToolButton label="Cut"><CutIcon /></ToolButton>
      <ToolButton label="Copy" disabled><CopyIcon /></ToolButton>
      <ToolButton label="Paste"><PasteIcon /></ToolButton>
      <ToolButton label="Delete"><DeleteIcon /></ToolButton>
    </ToolGroup>
    <ToolGroup>
      <Handle />
      <ToolButton label="Previous view"><RoundArrowIcon /></ToolButton>
      <ToolButton label="Next view" disabled><RoundArrowIcon flip faded /></ToolButton>
      <ToolButton label="Fit"><ZoomFitIcon /></ToolButton>
      <ToolButton label="Zoom in"><ZoomStepIcon plus /></ToolButton>
      <ToolButton label="Zoom out"><ZoomStepIcon /></ToolButton>
      <ToolButton label="Zoom to wave" disabled><ZoomWaveIcon /></ToolButton>
      <ToolButton label="Zoom to selection"><ZoomBoxIcon /></ToolButton>
      <ToolButton label="Fit Y"><ZoomYIcon /></ToolButton>
      <ToolButton label="Zoom to point" disabled><TargetIcon /></ToolButton>
    </ToolGroup>
    <ToolGroup>
      <Handle />
      <Combo label="Strip by" options={["family", "trace"]} width="w-[78px]" />
      <ToolButton label="Split strips"><SplitIcon /></ToolButton>
      <ToolButton label="Combine strips"><CombineIcon /></ToolButton>
      <ToolButton label="Spread strips"><SpreadIcon /></ToolButton>
      <ToolButton label="Append" disabled><ReloadIcon plus /></ToolButton>
      <ToolButton label="Replace" disabled><ReloadIcon /></ToolButton>
      <span className="w-4" />
    </ToolGroup>
    <ToolGroup grow>
      <Handle />
      <ToolButton label="Grid" width="w-[31px]" active><GridIcon /></ToolButton>
    </ToolGroup>
  </div>
);

const WindowToolbar = () => (
  <div className="flex h-[30px]">
    <ToolGroup>
      <Handle />
      <ToolButton label="Auto arrange" width="w-[29px]" active><WandIcon /></ToolButton>
      <ToolButton label="Card layout"><CardsIcon /></ToolButton>
      <ToolButton label="Horizontal layout"><RowsIcon /></ToolButton>
      <ToolButton label="Vertical layout"><ColumnsIcon /></ToolButton>
      <span className="w-[70px] pl-0.5">Subwindows:</span>
      <Combo label="Subwindows" options={["1", "2", "3"]} width="w-[70px]" indent="pl-4" />
    </ToolGroup>
    <ToolGroup>
      <Handle />
      <ToolButton label="Flag"><FlagIcon /></ToolButton>
      <ToolButton label="Info" width="w-[29px]" active><InfoIcon /></ToolButton>
    </ToolGroup>
    <ToolGroup>
      <Handle />
      <ToolButton label="Previous edge" disabled><StepArrowIcon /></ToolButton>
      <ToolButton label="Next edge" disabled><StepArrowIcon flip /></ToolButton>
      <Combo label="Step mode" options={["Data Point"]} width="w-[118px]" disabled />
      <input
        aria-label="Step value"
        disabled
        className="ml-px h-5 w-20 rounded bg-[#dedede] shadow-[0_0_1px_1px_#aaa]"
      />
    </ToolGroup>
    <ToolGroup>
      <Handle />
      <ToolButton label="Histogram" width="w-[29px]" disabled><HistogramIcon /></ToolButton>
    </ToolGroup>
    <ToolGroup>
      <Handle />
      <ToolButton label="Calculator" width="w-[29px]"><CalculatorIcon /></ToolButton>
    </ToolGroup>
    <ToolGroup grow>
      <Handle />
      <span className="w-1" />
      <Combo label="Workspace" options={["Classic", "Browser"]} width="w-[144px]" />
      <ToolButton label="Save workspace"><ViewSaveIcon /></ToolButton>
      <ToolButton label="Hide workspace"><ViewHideIcon /></ToolButton>
    </ToolGroup>
  </div>
);

const Tab = ({ active }) => (
  <div
    className={clsx(
      "flex w-64 items-center border-r border-r-[#9d9d9d] px-2.5",
      active ? "border-t-2 border-t-[#cc0000] bg-[#f0f0f0]" : "border-t border-t-[#b0b0b0] bg-[#d2d2d2] pt-px"
    )}
  >
    <button type="button" role="tab" aria-selected={active} className="flex flex-1 items-center gap-1.5">
      <GraphTabIcon />
      flow_multiplier front_sum_Mult sch...
    </button>
    <button type="button" aria-label="Close tab" className={active ? "text-[#666]" : "text-[#aaa]"}>
      <svg width="9" height="9" viewBox="0 0 9 9" aria-hidden="true">
        <path d="M1.5 1.5l6 6M7.5 1.5l-6 6" stroke="currentColor" strokeWidth="2" />
      </svg>
    </button>
  </div>
);

const Legend = () => (
  <aside className="w-[230px] shrink-0 border-r border-[#8a8a8a]">
    <table className="w-full table-fixed border-collapse text-left">
      <thead>
        <tr className="h-5 bg-linear-to-b from-[#c9c9c9] to-[#a9a9a9] text-[#222]">
          <th className="border-r border-[#777] p-0 pr-2 font-normal">
            <span className="flex items-center justify-between leading-4">
              Name
              <svg width="8" height="5" viewBox="0 0 8 5" aria-hidden="true">
                <path d="M0 5h8L4 0z" fill="#fff" stroke="#777" strokeWidth="0.5" />
              </svg>
            </span>
          </th>
          <th className="w-8 p-0 pl-0.5 leading-4 font-normal">Vis</th>
        </tr>
        <tr className="h-4" aria-hidden="true" />
      </thead>
      <tbody>
        {traces.map((trace, i) => (
          <tr key={trace.name} className="h-5 text-[#d6d6d6]">
            <td className="p-0">
              <span className="flex h-5 items-center pl-[3px]">
                <span
                  className={clsx(
                    "w-1.5 border-l border-dotted border-[#666]",
                    i === 0 ? "h-5" : "h-2.5 self-start border-b"
                  )}
                />
                <span className={clsx("ml-[3px] h-2.5 w-[15px]", trace.swatch)} />
                <span className="pl-[7px]">{trace.name}</span>
              </span>
            </td>
            <td className="p-0 pl-[5px]">
              <button type="button" aria-label={`Toggle ${trace.name}`} className="block">
                <EyeIcon />
              </button>
            </td>
          </tr>
        ))}
      </tbody>
    </table>
  </aside>
);

const GraphWindow = () => (
  <main className="mx-0.5 flex flex-1 flex-col border-2 border-[#cc0000] bg-black">
    <div className="flex flex-1 flex-col border border-[#f3d9d9]">
      <div className="flex h-[22px] items-start justify-between pr-[5px] pl-[3px] font-['Liberation_Serif',serif] text-[15px] leading-[19px] text-[#f0f0f0]">
        <span>Out2:In2</span>
        <div className="flex">
          <div className="w-[174px]">
            Wed May 15 15:21:09
            <svg width="32" height="3" className="ml-1 block" aria-hidden="true">
              <path d="M0 2.5h30" stroke="#ddd" strokeDasharray="5 3" />
            </svg>
          </div>
          <span>1</span>
        </div>
      </div>
      <div className="flex flex-1">
        <Legend />
        <div className="min-w-0 flex-1">
          <Chart />
        </div>
      </div>
    </div>
  </main>
);

const StatusBars = () => (
  <footer>
    <div className="mt-0.5 flex h-[19px] items-center rounded-b border-b border-[#888] bg-linear-to-b from-[#ececec] to-[#bcbcbc] pr-1.5 pl-[3px]">
      <span className="flex h-1.5 gap-px pr-0.5" aria-hidden="true">
        <span className="w-px bg-neutral-500" />
        <span className="w-px bg-neutral-500" />
        <span className="w-px bg-neutral-500" />
      </span>
      <span className="flex-1">mouse L:</span>
      <span>M:</span>
      <span className="flex-1 text-right">R:</span>
    </div>
    <div className="flex h-[21px] items-center border-b border-[#555] bg-[#f0f0f0] pr-[5px] pl-px">
      <span className="flex h-full w-[34px] items-center border-r border-[#555] bg-[#f8d8d8] pl-0.5">9(18)</span>
      <span className="flex-1 pl-2.5">
        Trace: In2; Context: /home/IC/simulation/front_sum_Mult/spectre/schematic/psf; Dataset: tran-tran
      </span>
      <span className="h-4 w-2 border-r border-b border-[#555] bg-[#a2a2a8]" />
    </div>
  </footer>
);

const tasks = [
  { label: "[IC@IC:~/Desktop...", icon: <TerminalIcon /> },
  { label: "virtuoso", icon: <CadenceIcon /> },
  { label: "Cadence Library ...", icon: <WindowIcon /> },
  { label: "front_sum_Mult", icon: <SchematicIcon /> },
  { label: "ADE L (3)", icon: <AdeIcon /> },
  { label: "Virtuoso (R) Visua...", icon: <WaveAppIcon />, active: true },
  { label: "/home/IC/simulati...", icon: <CadenceIcon /> },
  { label: "Choosing Analyse...", icon: <WindowIcon /> },
  { label: "[Cadence Help]", icon: <WindowIcon faded /> },
];

const Taskbar = () => (
  <footer className="flex h-[25px] items-center bg-[#008000] font-['DejaVu_Sans_Condensed','DejaVu_Sans',sans-serif] text-[15px] leading-5 text-[#0a1a0a]">
    <Handle dotted />
    <div className="flex h-full flex-1 pr-[9px] pl-[5px]">
      {tasks.map((task) => (
        <button
          type="button"
          key={task.label}
          className={clsx(
            "flex min-w-0 flex-1 items-center gap-[7px] pb-0.5 pl-1.5 text-left whitespace-nowrap",
            task.active && "rounded border border-[#777] bg-linear-to-b from-[#dcdad8] to-[#c2bebb]"
          )}
        >
          {task.icon}
          {task.label}
        </button>
      ))}
    </div>
    <div className="grid h-full w-[370px] grid-cols-9 gap-px bg-[#eceae8] p-px">
      {tasks.map((task, i) => (
        <button
          type="button"
          key={task.label}
          aria-label={`Workspace ${i + 1}`}
          className={clsx(
            "flex items-center",
            i === 0 ? "justify-center border-t border-[#4a74b8] bg-[#d3e2f6]" : "bg-[#a9a5a2]"
          )}
        >
          {i === 0 && <WaveAppIcon />}
          {i === 1 && <span className="h-3 w-[18px] border border-black bg-[#eceae8]" />}
        </button>
      ))}
    </div>
  </footer>
);

const App = () => {
  return (
    <div className="flex min-h-screen flex-col bg-[#f0f0f0] font-['Open_Sans','Noto_Sans',sans-serif] text-[11px] text-[#222]">
      <DesktopPanel />
      <TitleBar />
      <MenuBar />
      <MainToolbar />
      <WindowToolbar />
      <div role="tablist" className="mt-0.5 flex h-6 border-b-2 border-white">
        <Tab active />
        <Tab active={false} />
      </div>
      <GraphWindow />
      <StatusBars />
      <Taskbar />
    </div>
  );
};

export default App;
